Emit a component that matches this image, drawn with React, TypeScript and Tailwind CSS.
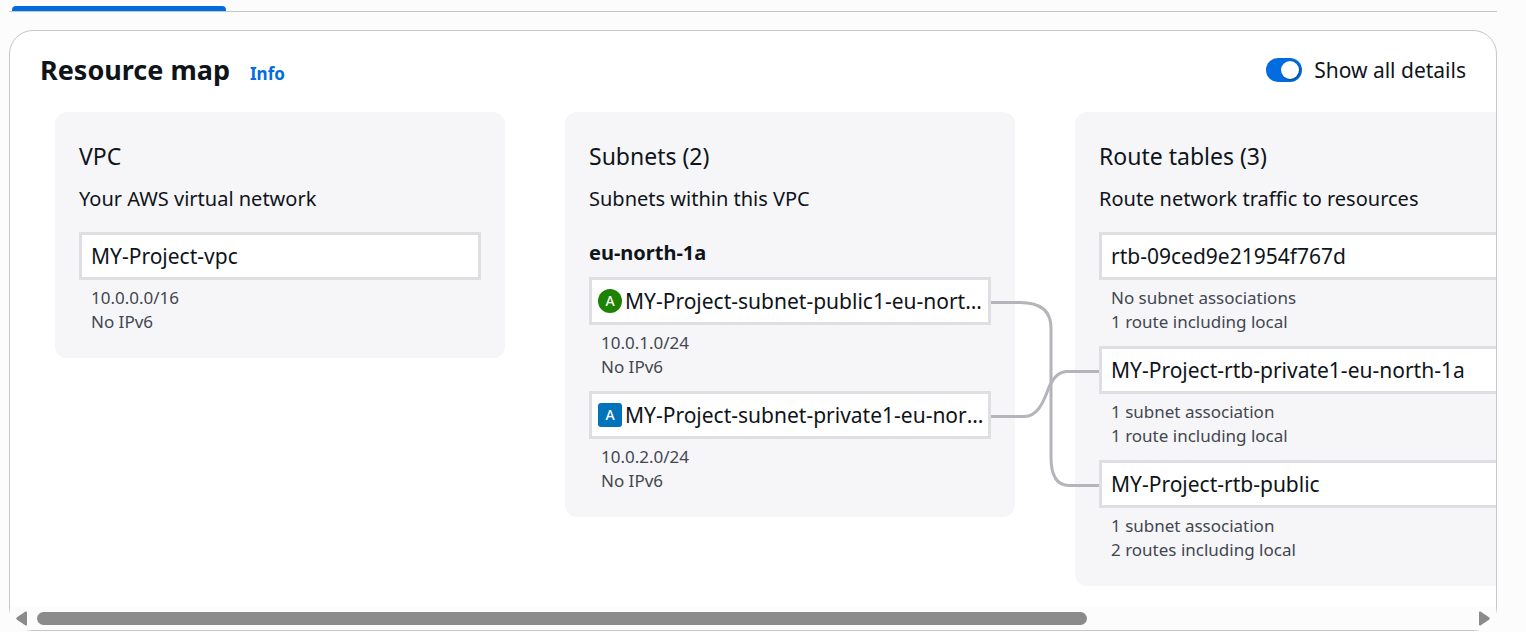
import { ReactNode, useState } from "react";

type Item = { name: string; details: string[]; badge?: "public" | "private" };

const vpcs: Item[] = [{ name: "MY-Project-vpc", details: ["10.0.0.0/16", "No IPv6"] }];

const subnets: Item[] = [
  { name: "MY-Project-subnet-public1-eu-north-1a", details: ["10.0.1.0/24", "No IPv6"], badge: "public" },
  { name: "MY-Project-subnet-private1-eu-north-1a", details: ["10.0.2.0/24", "No IPv6"], badge: "private" },
];

const routeTables: Item[] = [
  { name: "rtb-09ced9e21954f767d", details: ["No subnet associations", "1 route including local"] },
  { name: "MY-Project-rtb-private1-eu-north-1a", details: ["1 subnet association", "1 route including local"] },
  { name: "MY-Project-rtb-public", details: ["1 subnet association", "2 routes including local"] },
];

function Badge({ kind }: { kind: "public" | "private" }) {
  const shape = kind === "public" ? "rounded-full bg-[#1d8102]" : "rounded-[3px] bg-[#0073bb]";
  return (
    <span className={`flex size-6 shrink-0 items-center justify-center text-sm font-medium text-white ${shape}`}>A</span>
  );
}

function ResourceList({ items, showDetails }: { items: Item[]; showDetails: boolean }) {
  return (
    <ul className="flex flex-col gap-3">
      {items.map((item) => (
        <li key={item.name}>
          <div
            className={`flex h-12 items-center gap-[3px] border-[3px] border-[#dedee3] bg-white pr-1 ${
              item.badge ? "pl-1.5" : "pl-[9px]"
            }`}
          >
            {item.badge && <Badge kind={item.badge} />}
            <span className="truncate text-[21px] leading-7">{item.name}</span>
          </div>
          {showDetails && (
            <div className="pt-1.5 pl-3 text-[17px] leading-6 text-[#424650]">
              {item.details.map((d) => (
                <p key={d}>{d}</p>
              ))}
            </div>
          )}
        </li>
      ))}
    </ul>
  );
}

function Column({ title, description, children }: { title: string; description: string; children: ReactNode }) {
  return (
    <section className="w-[450px] shrink-0 rounded-xl bg-[#f6f6f9] px-6 pt-7 pb-6">
      <h3 className="text-[23px] leading-8">{title}</h3>
      <p className="mt-3 mb-[18px] text-xl leading-[30px]">{description}</p>
      {children}
    </section>
  );
}

function Connectors() {
  return (
    <svg
      className="absolute top-0 left-[936px]"
      width="108"
      height="474"
      viewBox="0 0 108 474"
      fill="none"
      stroke="#b4b4bb"
      strokeWidth="3"
      aria-hidden="true"
    >
      <path d="M0 190.5H29C50 190.5 60 199 60 216V345C60 364 66 373.5 78 373.5H108" />
      <path d="M0 304.5H33C50 304.5 55 281 59 273C63 265 69 259.5 76 259.5H108" />
    </svg>
  );
}

export default function App() {
  const [showDetails, setShowDetails] = useState(true);

  return (
    <main className="min-h-screen bg-[#fcfcfd] pt-1.5 pr-[29px] pb-px pl-[9px] font-['Noto_Sans',sans-serif] text-[#0f141a]">
      <div className="border-b border-[#c6c6cd] pl-[3px]">
        <div className="h-[5px] w-[214px] rounded-t bg-[#006ce0]" />
      </div>

      <div className="mt-[18px] rounded-3xl border border-[#c6c6cd] bg-white">
        <header className="flex items-center justify-between px-[30px] pt-[21px] pb-6">
          <div className="flex items-baseline gap-5">
            <h2 className="text-[27px] leading-9 font-bold">Resource map</h2>
            <a href="#info" className="text-[17px] leading-6 font-bold text-[#006ce0]">
              Info
            </a>
          </div>
          <label className="flex items-center gap-3 text-[21px] leading-[30px]">
            <span className="relative flex h-6 w-9 items-center rounded-full bg-[#006ce0]">
              <input
                type="checkbox"
                role="switch"
                checked={showDetails}
                onChange={(e) => setShowDetails(e.target.checked)}
                className="peer absolute inset-0 cursor-pointer appearance-none"
              />
              <span className="pointer-events-none ml-[3px] size-[18px] rounded-full bg-white shadow-[1px_1px_2px_rgba(0,0,0,0.35)] peer-checked:ml-[15px]" />
            </span>
            Show all details
          </label>
        </header>

        <div className="overflow-hidden pb-[21px] pl-[45px]">
          <div className="relative flex items-start gap-[60px]">
            <Column title="VPC" description="Your AWS virtual network">
              <ResourceList items={vpcs} showDetails={showDetails} />
            </Column>
            <Column title="Subnets (2)" description="Subnets within this VPC">
              <h4 className="pt-1.5 pb-[9px] text-xl leading-[30px] font-bold">eu-north-1a</h4>
              <ResourceList items={subnets} showDetails={showDetails} />
            </Column>
            <Column title="Route tables (3)" description="Route network traffic to resources">
              <ResourceList items={routeTables} showDetails={showDetails} />
            </Column>
            <Connectors />
          </div>
        </div>

        <div className="flex h-[23px] items-center gap-2.5 bg-[#fcfcfc] px-1.5">
          <button type="button" aria-label="Scroll left">
            <svg width="11" height="15" viewBox="0 0 11 15" fill="#8b8b8b" className="block">
              <path d="M11 1.5V13.5Q11 15 9.5 14.4L1 8.8Q-.4 7.5 1 6.2L9.5.6Q11 0 11 1.5Z" />
            </svg>
          </button>
          <div className="grow">
            <div className="h-[13px] w-11/15 rounded-full bg-[#8b8b8b]" />
          </div>
          <button type="button" aria-label="Scroll right">
            <svg width="11" height="15" viewBox="0 0 11 15" fill="#8b8b8b" className="block">
              <path d="M0 1.5V13.5Q0 15 1.5 14.4L10 8.8Q11.4 7.5 10 6.2L1.5.6Q0 0 0 1.5Z" />
            </svg>
          </button>
        </div>
      </div>
    </main>
  );
}
